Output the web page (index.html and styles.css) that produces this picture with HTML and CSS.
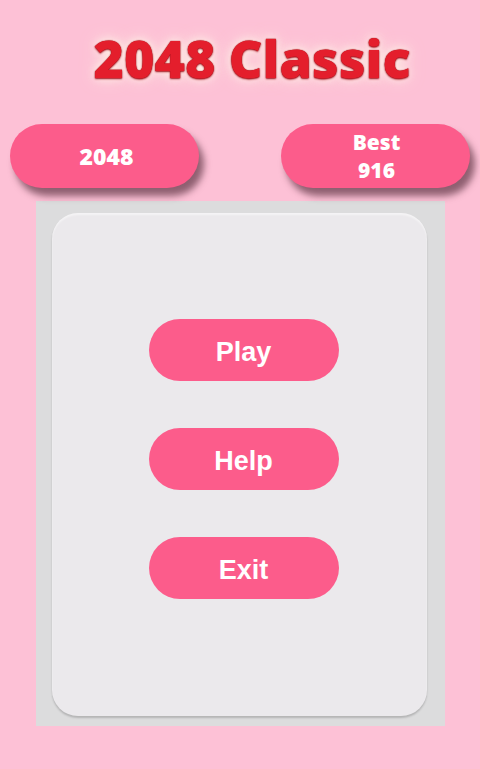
FILE: index.html
```html
<!DOCTYPE html>
<html lang="en">
<head>
    <meta charset="UTF-8">
    <meta name="viewport" content="width=device-width, initial-scale=1.0">
    <title>2048 Classic</title>
    <link rel="stylesheet" href="styles.css">
</head>
<body>
    <h1 class="title">2048 Classic</h1>

    <div class="scores">
        <div class="score-pill score-current">2048</div>
        <div class="score-pill score-best">
            <span>Best</span>
            <span>916</span>
        </div>
    </div>

    <div class="board">
        <div class="menu-card">
            <button class="menu-btn">Play</button>
            <button class="menu-btn">Help</button>
            <button class="menu-btn">Exit</button>
        </div>
    </div>
</body>
</html>
```

FILE: styles.css
```css
* {
    margin: 0;
    padding: 0;
    box-sizing: border-box;
}

body {
    font-family: 'Open Sans', 'Lato', sans-serif;
    background-color: #fdc1d6;
    width: 480px;
    height: 769px;
    overflow: hidden;
}

.title {
    padding-top: 24px;
    padding-left: 24px;
    text-align: center;
    font-size: 52px;
    line-height: 68px;
    font-weight: 800;
    color: #e41e2c;
    text-shadow: 0 0 1px #8e0a12, 0 1px 2px #a5101b, 0 0 10px rgba(255, 250, 235, 0.9), 0 0 18px rgba(255, 245, 230, 0.7);
}

.scores {
    display: flex;
    justify-content: space-between;
    padding: 32px 10px 0;
    position: relative;
    z-index: 1;
}

.score-pill {
    width: 189px;
    height: 64px;
    border-radius: 32px;
    background-color: #fc5c8b;
    color: #fff;
    font-weight: 800;
    display: flex;
    flex-direction: column;
    align-items: center;
    justify-content: center;
    text-align: center;
    box-shadow: 5px 8px 7px rgba(70, 30, 45, 0.6);
}

.score-current {
    font-size: 23px;
    padding-left: 4px;
}

.score-best {
    font-size: 21px;
    line-height: normal;
    padding-left: 2px;
}

.board {
    margin: 13px 35px 0 36px;
    height: 525px;
    background-color: #dcdcdd;
    padding: 12px 18px 10px 16px;
}

.menu-card {
    height: 503px;
    background-color: #ebe9ec;
    border-radius: 26px;
    box-shadow: 0 2px 2px rgba(0, 0, 0, 0.18), inset 0 2px 2px rgba(255, 255, 255, 0.5);
    display: flex;
    flex-direction: column;
    align-items: center;
    gap: 47px;
    padding-top: 106px;
    padding-left: 8px;
}

.menu-btn {
    width: 190px;
    height: 62px;
    padding-top: 4px;
    border: none;
    border-radius: 31px;
    background-color: #fc5c8b;
    color: #fff;
    font-family: 'Liberation Sans', Arial, sans-serif;
    font-weight: 700;
    font-size: 27px;
    cursor: pointer;
}
```
